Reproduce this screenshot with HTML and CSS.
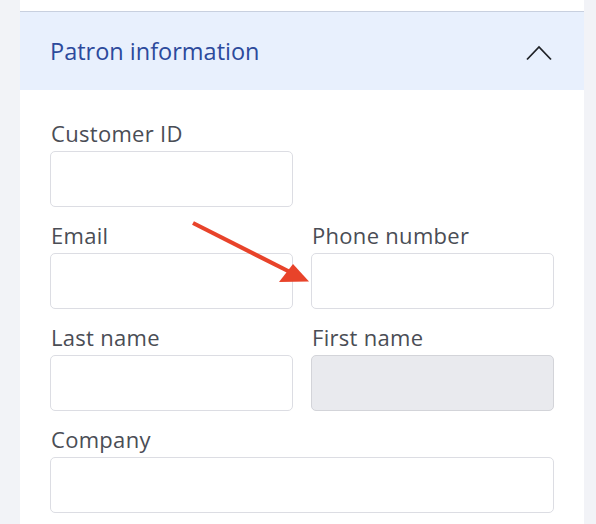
FILE: index.html
```html
<!DOCTYPE html>
<html lang="en">
<head>
<meta charset="utf-8">
<title>Patron information</title>
<link rel="stylesheet" href="styles.css">
</head>
<body>
<div class="card">
  <div class="card-top"></div>
  <div class="section-header">
    <h2 class="section-title">Patron information</h2>
    <svg class="chevron" width="26" height="16" viewBox="0 0 26 16" aria-hidden="true">
      <polyline points="1,14.5 13,2 25,14.5" fill="none" stroke="#1f2227" stroke-width="1.8" stroke-linejoin="miter"/>
    </svg>
  </div>
  <form class="form">
    <div class="field">
      <label class="label">Customer ID</label>
      <input class="input" type="text">
    </div>
    <div class="field"></div>
    <div class="field">
      <label class="label">Email</label>
      <input class="input" type="text">
    </div>
    <div class="field">
      <label class="label">Phone number</label>
      <input class="input" type="text">
    </div>
    <div class="field">
      <label class="label">Last name</label>
      <input class="input" type="text">
    </div>
    <div class="field">
      <label class="label">First name</label>
      <input class="input input-disabled" type="text" disabled>
    </div>
    <div class="field field-wide">
      <label class="label">Company</label>
      <input class="input" type="text">
    </div>
  </form>
</div>
<svg class="annotation" width="596" height="524" viewBox="0 0 596 524" aria-hidden="true">
  <line x1="193" y1="223" x2="290" y2="272" stroke="#e8432a" stroke-width="4.2" stroke-linecap="butt"/>
  <polygon points="309,281.5 279,282 293,264" fill="#e8432a"/>
</svg>
</body>
</html>
```
FILE: styles.css
```css
html, body {
  margin: 0;
  padding: 0;
  height: 100%;
  overflow: hidden;
}

body {
  background: #f2f3f7;
  font-family: "Open Sans", "Noto Sans", sans-serif;
  position: relative;
}

.card {
  margin-left: 20px;
  width: 564px;
  background: #ffffff;
  min-height: 524px;
}

.card-top {
  height: 11px;
}

.section-header {
  height: 78px;
  border-top: 1px solid #c8d0df;
  background: #e8f0fd;
  display: flex;
  align-items: center;
  justify-content: space-between;
  padding: 0 32px 0 30px;
}

.section-title {
  margin: 0;
  font-size: 23.5px;
  font-weight: 400;
  color: #2c4a9c;
  letter-spacing: 0;
}

.chevron {
  display: block;
  margin-top: 3px;
}

.form {
  display: grid;
  grid-template-columns: 243px 243px;
  column-gap: 18px;
  row-gap: 15px;
  padding: 30px 30px 20px 30px;
}

.field {
  display: flex;
  flex-direction: column;
  gap: 5px;
}

.field-wide {
  grid-column: 1 / span 2;
}

.label {
  font-size: 22px;
  line-height: 26px;
  letter-spacing: 0.3px;
  color: #4a4d55;
  padding-left: 1px;
}

.input {
  box-sizing: border-box;
  height: 56px;
  width: 100%;
  margin: 0;
  border: 1px solid #dcdde3;
  border-radius: 5px;
  background: #ffffff;
  font: inherit;
}

.input-disabled {
  background: #e9eaee;
  border-color: #d3d4d9;
}

.annotation {
  position: absolute;
  left: 0;
  top: 0;
  pointer-events: none;
}
```
